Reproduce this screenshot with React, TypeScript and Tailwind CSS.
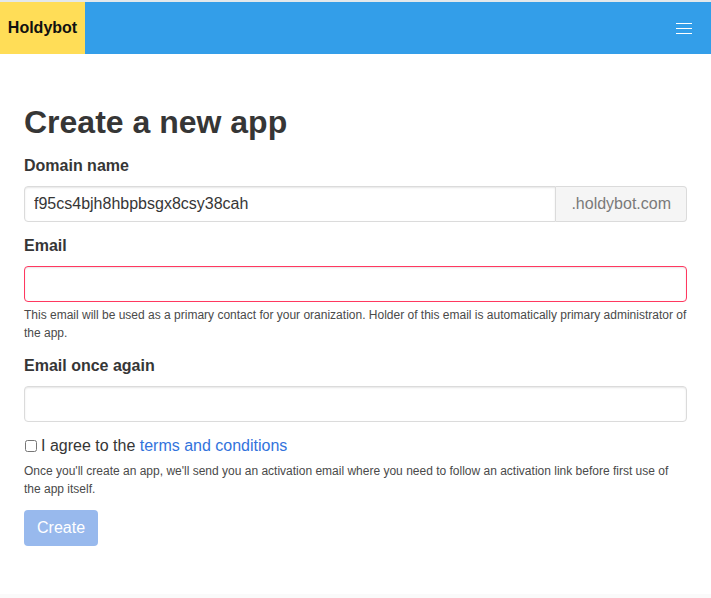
import React, { useState } from 'react';

const inputBase =
  'h-9 w-full rounded-[4px] border bg-white px-[9px] text-base text-[#363636] shadow-[inset_0_1px_2px_rgba(10,10,10,0.1)] outline-none';

const App: React.FC = () => {
  const [domain, setDomain] = useState('f95cs4bjh8hbpbsgx8csy38cah');
  const [email, setEmail] = useState('');
  const [email2, setEmail2] = useState('');
  const [agree, setAgree] = useState(false);

  return (
    <div className="min-h-screen bg-white font-['Liberation_Sans',Arial,sans-serif] text-[#4a4a4a]">
      <div className="h-[2px] bg-[#e3e8eb]" />
      <nav className="flex h-[52px] items-stretch bg-[#339ee9]">
        <a className="flex w-[85px] items-center justify-center bg-[#ffdd57] text-base font-bold text-[#111]">
          Holdybot
        </a>
        <div className="flex-1" />
        <button className="flex w-[52px] flex-col items-center justify-center gap-[4px] pr-[2px]">
          <span className="block h-px w-4 bg-white" />
          <span className="block h-px w-4 bg-white" />
          <span className="block h-px w-4 bg-white" />
        </button>
      </nav>

      <main className="px-6 pt-[50px] pb-12">
        <h1 className="mb-[14px] text-[32px] leading-9 font-bold text-[#363636]">Create a new app</h1>

        <div className="mb-3">
          <label className="mb-2 block text-base leading-6 font-bold text-[#363636]">Domain name</label>
          <div className="flex">
            <input
              value={domain}
              onChange={e => setDomain(e.target.value)}
              className={`${inputBase} rounded-r-none border-[#dbdbdb]`}
            />
            <span className="flex h-9 shrink-0 items-center rounded-r-[4px] border border-l-0 border-[#dbdbdb] bg-[#f5f5f5] px-[15px] text-base text-[#7a7a7a]">
              .holdybot.com
            </span>
          </div>
        </div>

        <div className="mb-3">
          <label className="mb-2 block text-base leading-6 font-bold text-[#363636]">Email</label>
          <input
            type="email"
            value={email}
            onChange={e => setEmail(e.target.value)}
            className={`${inputBase} border-[#ff3860]`}
          />
          <p className="mt-1 text-xs leading-[18px] text-[#4a4a4a]">
            This email will be used as a primary contact for your oranization. Holder of this email is automatically
            primary administrator of the app.
          </p>
        </div>

        <div className="mb-3">
          <label className="mb-2 block text-base leading-6 font-bold text-[#363636]">Email once again</label>
          <input
            type="email"
            value={email2}
            onChange={e => setEmail2(e.target.value)}
            className={`${inputBase} border-[#dbdbdb]`}
          />
        </div>

        <div className="mb-3">
          <label className="flex items-center text-base leading-6 text-[#363636]">
            <input
              type="checkbox"
              checked={agree}
              onChange={e => setAgree(e.target.checked)}
              className="mr-[4px] ml-[1px] h-[12px] w-[12px]"
            />
            I agree to the&nbsp;<a className="text-[#3273dc]">terms and conditions</a>
          </label>
          <p className="mt-1 text-xs leading-[18px] text-[#4a4a4a]">
            Once you'll create an app, we'll send you an activation email where you need to follow an activation link
            before first use of the app itself.
          </p>
        </div>

        <button
          disabled
          className="h-9 rounded-[4px] bg-[#98b9ed] px-[13px] text-base text-white"
        >
          Create
        </button>
      </main>

      <footer className="h-12 bg-[#fafafa]" />
    </div>
  );
};

export default App;
